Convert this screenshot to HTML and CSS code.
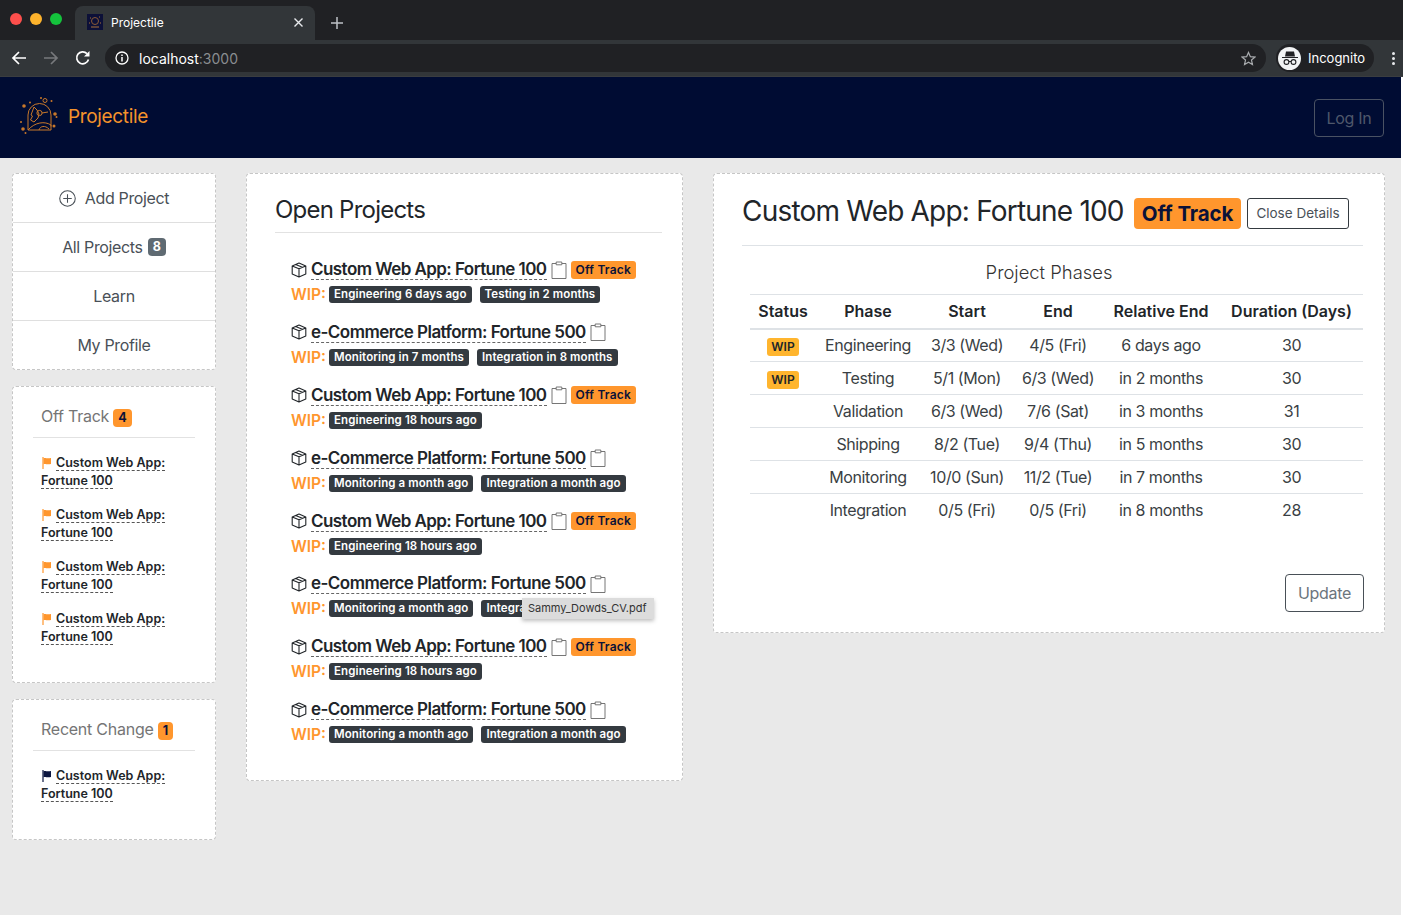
FILE: index.html
```html
<!DOCTYPE html>
<html lang="en">
<head>
  <meta charset="UTF-8">
  <title>Projectile</title>
  <link rel="stylesheet" href="styles.css">
</head>
<body>
  <svg class="defs" width="0" height="0">
    <symbol id="box" viewBox="0 0 16 16"><path d="M8 1 14.8 3.9V12L8 15 1.200 12V3.900ZM1.200 3.900 8 6.800 14.800 3.900M8 6.800V15M4.600 2.450 11.400 5.350" fill="none" stroke="currentColor" stroke-width="1.100" stroke-linejoin="round"/></symbol>
    <symbol id="clip" viewBox="0 0 16 18"><path d="M5 2.500H1V17.500H15V2.500H11M5.200 1H10.800V3.800H5.200Z" fill="none" stroke="#666" stroke-width=".9"/></symbol>
    <symbol id="flag" viewBox="0 0 10 12"><path d="M1 0V12" stroke="currentColor" stroke-width="1.200"/><path d="M1.500 1.200C3.500.4 5 2 9 1V7C5 8 3.500 6.400 1.500 7.200Z" fill="currentColor"/></symbol>
  </svg>

  <div class="tabstrip">
    <div class="lights"><i class="red"></i><i class="yellow"></i><i class="green"></i></div>
    <div class="tab">
      <svg class="favicon" width="16" height="16" viewBox="0 0 16 16"><rect width="16" height="16" fill="#0c1038"/><circle cx="8" cy="7" r="3.500" fill="none" stroke="#8a5a35"/><path d="M4 13H12M3 4H4M12 3H13M2 9H3M13 9H14" stroke="#a8703a"/></svg>
      <span class="tab-title">Projectile</span>
      <svg width="9" height="9" viewBox="0 0 9 9"><path d="M.5.500 8.500 8.500M8.500.500.500 8.500" stroke="#e8eaed" stroke-width="1.400"/></svg>
    </div>
    <svg class="newtab" width="12" height="12" viewBox="0 0 12 12"><path d="M6 0V12M0 6H12" stroke="#bdc1c6" stroke-width="1.500"/></svg>
  </div>
  <div class="toolbar">
    <svg class="nav" width="16" height="16" viewBox="0 0 16 16"><path d="M15 8H2M8 2 2 8l6 6" fill="none" stroke="#fff" stroke-width="1.700"/></svg>
    <svg class="nav" width="16" height="16" viewBox="0 0 16 16"><path d="M1 8H14M8 2l6 6-6 6" fill="none" stroke="#77797c" stroke-width="1.700"/></svg>
    <svg class="nav" width="16" height="16" viewBox="0 0 16 16"><path d="M13.500 9.500A6 6 0 1 1 12 3.600" fill="none" stroke="#fff" stroke-width="1.700"/><path d="M14.500 1V6.500H9Z" fill="#fff"/></svg>
    <div class="omnibox">
      <svg width="14" height="14" viewBox="0 0 14 14"><circle cx="7" cy="7" r="6" fill="none" stroke="#fff" stroke-width="1.300"/><path d="M7 6V10.500M7 3.400V5" stroke="#fff" stroke-width="1.500"/></svg>
      <span class="url">localhost<span class="port">:3000</span></span>
      <svg class="star" width="15" height="15" viewBox="0 0 16 16"><path d="M8 1.500 10 6l4.800.5-3.600 3.200 1 4.800L8 12l-4.200 2.500 1-4.800L1.200 6.500 6 6Z" fill="none" stroke="#a8abae" stroke-width="1.300"/></svg>
    </div>
    <div class="incognito">
      <span class="spy"><svg width="18" height="18" viewBox="0 0 18 18"><path d="M1 8H17V9H1ZM4 7.500 5 2.500H13L14 7.500Z" fill="#202124"/><circle cx="5.500" cy="13" r="2.400" fill="none" stroke="#202124" stroke-width="1.100"/><circle cx="12.500" cy="13" r="2.400" fill="none" stroke="#202124" stroke-width="1.100"/><path d="M8 12.500H10" stroke="#202124"/></svg></span>
      <span>Incognito</span>
    </div>
    <div class="kebab"><i></i><i></i><i></i></div>
  </div>

  <div class="page">
    <header class="topbar">
      <a class="brand">
        <svg width="44" height="44" viewBox="0 0 44 44" fill="none" stroke="#c8782a" stroke-width="1">
          <path d="M11 35V20a11.500 11.500 0 0 1 23 0V31.500"/>
          <path d="M11 35H34V30C28 26 18 27 11 35Z"/>
          <path d="M20 15 17 12 14 20 15.500 21 13.500 25 17 27 21 23 22 19 20 15Z"/>
          <circle cx="22.500" cy="18" r="2.600"/>
          <path d="M25 18 31 17M22 35C23 31 28 30 32 34"/>
          <circle cx="28" cy="5.500" r="2"/>
          <g fill="#c8782a" stroke="none">
            <circle cx="7" cy="11" r="1.800"/><circle cx="13" cy="7.500" r="1"/><circle cx="24" cy="3" r="1"/><circle cx="34.500" cy="6" r="1"/>
            <circle cx="38" cy="19" r="1.800"/><circle cx="39.500" cy="22" r="1"/><circle cx="37" cy="31" r="1.500"/>
            <circle cx="4" cy="27" r="1"/><circle cx="6" cy="34" r="1.800"/><circle cx="8.500" cy="38" r="1"/>
          </g>
        </svg>
        <span>Projectile</span>
      </a>
      <button class="login">Log In</button>
    </header>

    <main class="layout">
      <aside class="sidebar">
        <nav class="card menu">
          <a class="menu-item"><svg width="17" height="17" viewBox="0 0 16 16"><circle cx="8" cy="8" r="7.300" fill="none" stroke="#495057"/><path d="M8 4V12M4 8H12" stroke="#495057"/></svg>Add Project</a>
          <a class="menu-item">All Projects <span class="pill pill-grey">8</span></a>
          <a class="menu-item">Learn</a>
          <a class="menu-item">My Profile</a>
        </nav>

        <section class="card side-card offtrack">
          <h5 class="side-title">Off Track <span class="pill pill-orange">4</span></h5>
          <a class="side-link"><svg class="flag"><use href="#flag"/></svg><span>Custom Web App: Fortune 100</span></a>
          <a class="side-link"><svg class="flag"><use href="#flag"/></svg><span>Custom Web App: Fortune 100</span></a>
          <a class="side-link"><svg class="flag"><use href="#flag"/></svg><span>Custom Web App: Fortune 100</span></a>
          <a class="side-link"><svg class="flag"><use href="#flag"/></svg><span>Custom Web App: Fortune 100</span></a>
        </section>

        <section class="card side-card recent">
          <h5 class="side-title">Recent Change <span class="pill pill-orange">1</span></h5>
          <a class="side-link"><svg class="flag navy"><use href="#flag"/></svg><span>Custom Web App: Fortune 100</span></a>
        </section>
      </aside>

      <section class="card projects">
        <h4 class="projects-title">Open Projects</h4>

        <div class="project">
          <div class="project-name"><svg class="box"><use href="#box"/></svg> <a>Custom Web App: Fortune 100</a> <svg class="clip"><use href="#clip"/></svg> <span class="tag-off">Off Track</span></div>
          <div class="project-wip"><b>WIP:</b> <span class="phase">Engineering 6 days ago</span> <span class="phase">Testing in 2 months</span></div>
        </div>
        <div class="project">
          <div class="project-name"><svg class="box"><use href="#box"/></svg> <a>e-Commerce Platform: Fortune 500</a> <svg class="clip"><use href="#clip"/></svg></div>
          <div class="project-wip"><b>WIP:</b> <span class="phase">Monitoring in 7 months</span> <span class="phase">Integration in 8 months</span></div>
        </div>
        <div class="project">
          <div class="project-name"><svg class="box"><use href="#box"/></svg> <a>Custom Web App: Fortune 100</a> <svg class="clip"><use href="#clip"/></svg> <span class="tag-off">Off Track</span></div>
          <div class="project-wip"><b>WIP:</b> <span class="phase">Engineering 18 hours ago</span></div>
        </div>
        <div class="project">
          <div class="project-name"><svg class="box"><use href="#box"/></svg> <a>e-Commerce Platform: Fortune 500</a> <svg class="clip"><use href="#clip"/></svg></div>
          <div class="project-wip"><b>WIP:</b> <span class="phase">Monitoring a month ago</span> <span class="phase">Integration a month ago</span></div>
        </div>
        <div class="project">
          <div class="project-name"><svg class="box"><use href="#box"/></svg> <a>Custom Web App: Fortune 100</a> <svg class="clip"><use href="#clip"/></svg> <span class="tag-off">Off Track</span></div>
          <div class="project-wip"><b>WIP:</b> <span class="phase">Engineering 18 hours ago</span></div>
        </div>
        <div class="project has-tooltip">
          <div class="project-name"><svg class="box"><use href="#box"/></svg> <a>e-Commerce Platform: Fortune 500</a> <svg class="clip"><use href="#clip"/></svg></div>
          <div class="project-wip"><b>WIP:</b> <span class="phase">Monitoring a month ago</span> <span class="phase">Integration a month ago</span></div>
          <div class="tooltip">Sammy_Dowds_CV.pdf</div>
        </div>
        <div class="project">
          <div class="project-name"><svg class="box"><use href="#box"/></svg> <a>Custom Web App: Fortune 100</a> <svg class="clip"><use href="#clip"/></svg> <span class="tag-off">Off Track</span></div>
          <div class="project-wip"><b>WIP:</b> <span class="phase">Engineering 18 hours ago</span></div>
        </div>
        <div class="project">
          <div class="project-name"><svg class="box"><use href="#box"/></svg> <a>e-Commerce Platform: Fortune 500</a> <svg class="clip"><use href="#clip"/></svg></div>
          <div class="project-wip"><b>WIP:</b> <span class="phase">Monitoring a month ago</span> <span class="phase">Integration a month ago</span></div>
        </div>
      </section>

      <section class="card details">
        <div class="details-head">
          <h3>Custom Web App: Fortune 100</h3>
          <span class="tag-big">Off Track</span>
          <button class="close-btn">Close Details</button>
        </div>
        <div class="table-caption">Project Phases</div>
        <table class="phases">
          <thead>
            <tr><th>Status</th><th>Phase</th><th>Start</th><th>End</th><th>Relative End</th><th>Duration (Days)</th></tr>
          </thead>
          <tbody>
            <tr><td><span class="wip">WIP</span></td><td>Engineering</td><td>3/3 (Wed)</td><td>4/5 (Fri)</td><td>6 days ago</td><td>30</td></tr>
            <tr><td><span class="wip">WIP</span></td><td>Testing</td><td>5/1 (Mon)</td><td>6/3 (Wed)</td><td>in 2 months</td><td>30</td></tr>
            <tr><td></td><td>Validation</td><td>6/3 (Wed)</td><td>7/6 (Sat)</td><td>in 3 months</td><td>31</td></tr>
            <tr><td></td><td>Shipping</td><td>8/2 (Tue)</td><td>9/4 (Thu)</td><td>in 5 months</td><td>30</td></tr>
            <tr><td></td><td>Monitoring</td><td>10/0 (Sun)</td><td>11/2 (Tue)</td><td>in 7 months</td><td>30</td></tr>
            <tr><td></td><td>Integration</td><td>0/5 (Fri)</td><td>0/5 (Fri)</td><td>in 8 months</td><td>28</td></tr>
          </tbody>
        </table>
        <div class="details-foot"><button class="update-btn">Update</button></div>
      </section>
    </main>
  </div>
</body>
</html>
```

FILE: styles.css
```css
* {
  box-sizing: border-box;
}

body {
  margin: 0;
  height: 915px;
  overflow: hidden;
  background-color: #fff;
  font-family: Inter, "Liberation Sans", sans-serif;
  font-size: 16px;
  color: #212529;
}

.defs {
  display: block;
  height: 0;
}

/* browser chrome */
.tabstrip {
  display: flex;
  align-items: flex-end;
  height: 40px;
  background-color: #202124;
}

.lights {
  display: flex;
  gap: 8px;
  align-self: flex-start;
  padding: 13px 0 0 10px;
  width: 75px;
}

.lights i {
  width: 12px;
  height: 12px;
  border-radius: 50%;
}

.red { background-color: #fc4f4c; }
.yellow { background-color: #fdb32c; }
.green { background-color: #14c33c; }

.tab {
  display: flex;
  align-items: center;
  width: 240px;
  height: 34px;
  padding: 0 12px 2px 12px;
  border-radius: 8px 8px 0 0;
  background-color: #323639;
  color: #fff;
  font-size: 12px;
}

.favicon {
  margin-right: 8px;
}

.tab-title {
  flex: 1;
}

.newtab {
  margin: 0 0 11px 16px;
}

.toolbar {
  display: flex;
  align-items: center;
  height: 37px;
  padding: 0 8px 0 11px;
  background-color: #323639;
  border-bottom: 1px solid #3a3d40;
}

.nav {
  margin-right: 16px;
}

.omnibox {
  display: flex;
  align-items: center;
  gap: 10px;
  flex: 1;
  height: 28px;
  margin-left: -2px;
  padding: 0 10px;
  border-radius: 14px;
  background-color: #202124;
}

.url {
  flex: 1;
  font-size: 14px;
  color: #fff;
}

.port {
  color: #8a8d90;
}

.incognito {
  display: flex;
  align-items: center;
  gap: 7px;
  width: 98px;
  height: 28px;
  margin-left: 10px;
  padding-left: 2px;
  border-radius: 14px;
  background-color: #202124;
  color: #fff;
  font-size: 13px;
}

.spy {
  display: flex;
  align-items: center;
  justify-content: center;
  width: 23px;
  height: 23px;
  border-radius: 50%;
  background-color: #f1f3f4;
}

.kebab {
  display: flex;
  flex-direction: column;
  gap: 2px;
  margin-left: 18px;
}

.kebab i {
  width: 3px;
  height: 3px;
  border-radius: 50%;
  background-color: #e8eaed;
}

/* app */
.page {
  width: 1401px;
  height: 838px;
  background-color: #e9e9e9;
}

.topbar {
  display: flex;
  align-items: center;
  justify-content: space-between;
  height: 81px;
  padding: 0 17px 0 17px;
  background-color: #000c33;
}

.brand {
  display: flex;
  align-items: center;
  gap: 7px;
  margin-bottom: 2px;
  color: #f4922b;
  font-size: 19px;
  letter-spacing: -.35px;
}

.login {
  width: 70px;
  height: 38px;
  padding: 0;
  border: 1px solid #4a5263;
  border-radius: 4px;
  background: none;
  color: #4f586b;
  font-family: inherit;
  font-size: 16px;
  letter-spacing: -.3px;
}

.layout {
  display: flex;
  align-items: flex-start;
  gap: 30px;
  padding: 15px 12px;
}

.card {
  border: 1px dashed #c6c6c6;
  border-radius: 4px;
  background-color: #fff;
}

.sidebar {
  display: flex;
  flex-direction: column;
  gap: 16px;
  width: 204px;
}

.menu-item {
  display: flex;
  align-items: center;
  justify-content: center;
  gap: 5px;
  height: 49px;
  border-bottom: 1px solid #dfdfdf;
  color: #495057;
  letter-spacing: -.35px;
}

.menu-item:last-child {
  height: 48px;
  border-bottom: none;
}

.menu-item svg {
  margin-right: 4px;
}

.pill {
  display: inline-block;
  padding: 0 5px;
  border-radius: 4px;
  font-size: 12.500px;
  font-weight: 700;
  letter-spacing: 0;
  line-height: 18px;
}

.pill-grey {
  background-color: #5f6a72;
  color: #fff;
}

.pill-orange {
  background-color: #ff962d;
  color: #0b1238;
}

.side-card {
  padding: 19px 20px 0;
}

.offtrack {
  height: 297px;
}

.recent {
  height: 141px;
}

.side-title {
  margin: 0 0 16px;
  padding: 0 0 10px 8px;
  border-bottom: 1px solid #e2e2e2;
  color: #757575;
  font-size: 16px;
  font-weight: 400;
  letter-spacing: -.25px;
  line-height: 21px;
}

.side-link {
  display: block;
  width: 135px;
  margin: 0 0 16px 8px;
  color: #212529;
  font-size: 12.500px;
  font-weight: 600;
  line-height: 18px;
}

.side-link span {
  border-bottom: 1px dashed #555;
}

.flag {
  width: 10px;
  height: 12px;
  margin: 0 4px 0 1px;
  color: #ff962d;
  vertical-align: -2px;
}

.flag.navy {
  color: #0b1640;
}

.projects {
  width: 437px;
  height: 608px;
  padding: 0 20px 0 28px;
}

.projects-title {
  margin: 0 0 24.500px;
  padding: 21px 0 8px;
  border-bottom: 1px solid #e2e2e2;
  font-size: 24px;
  font-weight: 400;
  letter-spacing: -.77px;
  line-height: 29px;
  color: #212529;
}

.project {
  position: relative;
  height: 62.900px;
  padding-left: 16px;
}

.project-name {
  display: flex;
  align-items: center;
  height: 24px;
  font-size: 17px;
  font-weight: 600;
  letter-spacing: -.55px;
  white-space: nowrap;
}

.project-name a {
  border-bottom: 1px dashed #666;
  line-height: 20px;
}

.box {
  width: 16px;
  height: 16px;
  margin-right: 4px;
  color: #212529;
}

.clip {
  width: 16px;
  height: 18px;
  margin-left: 4px;
}

.tag-off {
  margin-left: 4px;
  padding: 0 5px;
  border-radius: 3px;
  background-color: #ff962d;
  color: #0b1238;
  font-size: 12px;
  font-weight: 600;
  letter-spacing: .2px;
  line-height: 18px;
}

.project-wip {
  display: flex;
  align-items: center;
  gap: 3px;
  height: 26px;
  white-space: nowrap;
}

.project-wip b {
  color: #ff962d;
  font-size: 15.500px;
  font-weight: 600;
}

.phase {
  margin-right: 5px;
  padding: 0 5px;
  border-radius: 3px;
  background-color: #343a40;
  color: #fff;
  font-size: 11.500px;
  font-weight: 600;
  letter-spacing: .1px;
  line-height: 17px;
}

.tooltip {
  position: absolute;
  top: 26px;
  left: 247px;
  padding: 0 7px 0 6px;
  background-color: #dcdcdc;
  box-shadow: 0 2px 4px rgba(0, 0, 0, .25);
  color: #333;
  font-size: 11px;
  line-height: 21px;
  white-space: nowrap;
}

.details {
  width: 672px;
  height: 460px;
  padding: 0 21px 0 28px;
}

.details-head {
  display: flex;
  align-items: center;
  height: 72px;
  padding-top: 7px;
  border-bottom: 1px solid #dee2e6;
}

.details-head h3 {
  margin: -5px 10px 0 0;
  font-size: 28px;
  font-weight: 400;
  letter-spacing: -.8px;
  white-space: nowrap;
}

.tag-big {
  padding: 0 8px;
  border-radius: 4px;
  background-color: #ff962d;
  color: #0b1238;
  font-size: 20.500px;
  font-weight: 700;
  letter-spacing: -.1px;
  line-height: 31px;
  white-space: nowrap;
}

.close-btn {
  height: 31px;
  margin-left: 6px;
  padding: 0 8px;
  border: 1px solid #343a40;
  border-radius: 3px;
  background: #fff;
  color: #495057;
  font-family: inherit;
  font-size: 13.500px;
  white-space: nowrap;
}

.table-caption {
  margin: 14px 7px 0 0;
  text-align: center;
  color: #333;
  font-size: 18.400px;
  font-weight: 300;
  line-height: 24px;
}

.phases {
  table-layout: fixed;
  width: 613px;
  margin: 10px 0 0 8px;
  border-collapse: collapse;
  text-align: center;
}

.phases th {
  padding: 4px 0 5px;
  height: 34px;
  border-top: 1px solid #dee2e6;
  border-bottom: 2px solid #dee2e6;
  font-size: 16px;
  font-weight: 600;
}

.phases th:nth-child(1) { width: 66px; }
.phases th:nth-child(2) { width: 104px; }
.phases th:nth-child(3) { width: 94px; }
.phases th:nth-child(4) { width: 88px; }
.phases th:nth-child(5) { width: 118px; }

.phases td {
  padding: 0;
  height: 33px;
  border-bottom: 1px solid #dee2e6;
  color: #3a3f44;
  letter-spacing: -.4px;
}

.phases tr:last-child td {
  border-bottom: none;
}

.wip {
  display: inline-block;
  padding: 0 4px;
  border-radius: 3px;
  background-color: #ffb52e;
  color: #212529;
  font-size: 12px;
  font-weight: 600;
  letter-spacing: 0;
  line-height: 18px;
}

.details-foot {
  display: flex;
  justify-content: flex-end;
  margin: 47px -1px 0 0;
}

.update-btn {
  width: 79px;
  height: 38px;
  border: 1px solid #495057;
  border-radius: 4px;
  background: #fff;
  color: #6c757d;
  font-family: inherit;
  font-size: 16px;
  letter-spacing: -.3px;
}
```
